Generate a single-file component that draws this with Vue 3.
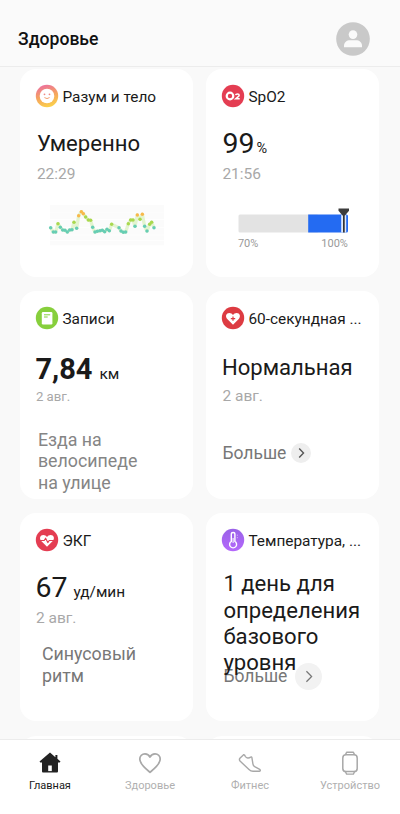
<script setup>
const dots = [
  [32, 83], [40, 96], [47, 96], [54, 71], [61, 82], [68, 90], [75, 91], [82, 96], [89, 90], [96, 89],
  [102, 67], [110, 85], [116, 47], [124, 35], [130, 41], [137, 51], [145, 60], [152, 61], [158, 82],
  [165, 96], [172, 94], [180, 92], [187, 91], [194, 95], [201, 88], [208, 92], [215, 73], [237, 83],
  [243, 93], [250, 97], [257, 96], [265, 71], [272, 60], [279, 60], [285, 79], [292, 45], [300, 58],
  [307, 43], [314, 79], [321, 93], [329, 73], [335, 67], [342, 83],
]
const line = dots.map((d) => d.join(',')).join(' ')
const dotColor = (y) => (y < 50 ? '#f9b84a' : y < 76 ? '#a9d84e' : '#66cdb4')
const bands = [15, 37, 60, 83, 106, 122]
</script>

<template>
  <div class="screen">
    <header class="topbar">
      <h1>Здоровье</h1>
      <svg class="avatar" viewBox="0 0 34 34">
        <circle cx="17" cy="17" r="16.8" fill="#c9c9c9" />
        <circle cx="17" cy="12.6" r="4.3" fill="#fafafa" />
        <path d="M8 25.2v-1.400c0-3.600 2.800-5.600 6-5.600h6c3.200 0 6 2 6 5.600v1.400z" fill="#fafafa" />
      </svg>
    </header>

    <main class="grid">
      <section class="card mind">
        <div class="head">
          <svg viewBox="0 0 24 24">
            <defs>
              <linearGradient id="mind" x1="0.3" y1="0" x2="0.6" y2="1">
                <stop offset="0" stop-color="#ec6f9f" />
                <stop offset="0.5" stop-color="#f5a35f" />
                <stop offset="1" stop-color="#fbd24a" />
              </linearGradient>
            </defs>
            <circle cx="12" cy="12" r="11.200" fill="url(#mind)" />
            <circle cx="12" cy="12" r="7.300" fill="#fff" />
            <circle cx="9.500" cy="10.300" r="0.900" fill="#ee8a85" />
            <circle cx="14.500" cy="10.300" r="0.900" fill="#ee8a85" />
            <path d="M9.700 13.800q2.300 1.800 4.600 0" fill="none" stroke="#f3a070" stroke-width="1" stroke-linecap="round" />
          </svg>
          <h2>Разум и тело</h2>
        </div>
        <p class="value word">Умеренно</p>
        <p class="date">22:29</p>
        <svg class="chart" viewBox="24 12 351 126">
          <rect v-for="(y, i) in bands" :key="y" x="30" :y="y" width="342" :height="i > 3 ? 14 : 21" fill="#fbfbfb" />
          <polyline :points="line" fill="none" stroke="#e3f4cf" stroke-width="10" stroke-linejoin="round" />
          <circle v-for="d in dots" :key="d[0]" :cx="d[0]" :cy="d[1]" r="5.200" :fill="dotColor(d[1])" />
        </svg>
      </section>

      <section class="card oxygen">
        <div class="head">
          <svg viewBox="0 0 24 24">
            <circle cx="12" cy="12" r="11.200" fill="#e43d52" />
            <circle cx="9" cy="12" r="3.300" fill="none" stroke="#fff" stroke-width="2.200" />
            <path d="M14.600 11.200q.2-1.300 1.900-1.300 1.700 0 1.700 1.300 0 .9-1.500 2l-1.900 1.600h3.900" fill="none" stroke="#fff" stroke-width="1.500" />
          </svg>
          <h2>SpO2</h2>
        </div>
        <p class="value number">99<small>%</small></p>
        <p class="date">21:56</p>
        <svg class="gauge" viewBox="0 0 112 26">
          <rect x="0.500" y="7.500" width="80" height="18" rx="1.500" fill="#e3e3e3" />
          <path d="M70.200 7.500h38.300a1.500 1.500 0 0 1 1.500 1.500v15a1.500 1.500 0 0 1-1.500 1.500h-38.300z" fill="#246bf2" />
          <rect x="103.200" y="8" width="5" height="17.500" fill="#dfe9fc" />
          <rect x="105" y="7" width="1.700" height="18.500" fill="#333" />
          <path d="M100.500 1.500h10.500v2.200l-4 4.800h-2.500l-4-4.800z" fill="#3c3c3c" />
        </svg>
        <div class="scale"><span>70%</span><span>100%</span></div>
      </section>

      <section class="card records">
        <div class="head">
          <svg viewBox="0 0 24 24">
            <circle cx="12" cy="12" r="11.200" fill="#87cf3c" />
            <rect x="6.800" y="6" width="10.600" height="12.400" rx="1.200" fill="#fff" />
            <path d="M9 8.800h6.200M9 11h3.700" stroke="#87cf3c" stroke-width="1" />
          </svg>
          <h2>Записи</h2>
        </div>
        <p class="value number">7,84<small>км</small></p>
        <p class="date">2 авг.</p>
        <p class="note">Езда на<br />велосипеде<br />на улице</p>
      </section>

      <section class="card pulse">
        <div class="head">
          <svg viewBox="0 0 24 24">
            <circle cx="12" cy="12" r="11.200" fill="#dd3b42" />
            <path d="M12 18.800 6.500 13.200C3.700 10.200 5.300 6.900 8.300 6.900c1.600 0 2.900.8 3.700 2 .8-1.200 2.100-2 3.700-2 3 0 4.600 3.300 1.800 6.300z" fill="#fff" />
            <path d="M12 10.400v4.400M9.800 12.600h4.400" stroke="#dd3b42" stroke-width="1.200" />
          </svg>
          <h2>60-секундная ...</h2>
        </div>
        <p class="value word">Нормальная</p>
        <p class="date">2 авг.</p>
        <div class="more">
          <span>Больше</span>
          <svg viewBox="0 0 20 20">
            <circle cx="10" cy="10" r="10" fill="#eeeeee" />
            <path d="m8.200 5.600 4.300 4.400-4.300 4.400" fill="none" stroke="#555" stroke-width="1.400" />
          </svg>
        </div>
      </section>

      <section class="card ecg">
        <div class="head">
          <svg viewBox="0 0 24 24">
            <circle cx="12" cy="12" r="11.200" fill="#e43d52" />
            <path d="M12 18.800 6.500 13.200C3.700 10.200 5.300 6.900 8.300 6.900c1.600 0 2.900.8 3.700 2 .8-1.200 2.100-2 3.700-2 3 0 4.600 3.300 1.800 6.300z" fill="#fff" />
            <path d="M5 12.500h4.200l1.400-2.300 2.200 4.400 1.400-2.100H19" fill="none" stroke="#e43d52" stroke-width="1.100" stroke-linejoin="round" />
          </svg>
          <h2>ЭКГ</h2>
        </div>
        <p class="value number">67<small>уд/мин</small></p>
        <p class="date">2 авг.</p>
        <p class="note">Синусовый<br />ритм</p>
      </section>

      <section class="card temperature">
        <div class="head">
          <svg viewBox="0 0 24 24">
            <defs>
              <linearGradient id="temp" x1="0" y1="0" x2="0" y2="1">
                <stop offset="0" stop-color="#9a62e8" />
                <stop offset="1" stop-color="#b468fb" />
              </linearGradient>
            </defs>
            <circle cx="12" cy="12" r="11.200" fill="url(#temp)" />
            <path d="M10.300 13.400V6.300a1.800 1.800 0 0 1 3.600 0v7.100a3.500 3.500 0 1 1-3.600 0z" fill="none" stroke="#fff" stroke-width="1.400" />
            <path d="M12.100 10v5" stroke="#fff" stroke-width="1" />
            <path d="M15.800 7.200h1.200M15.800 9.700h1.200" stroke="#dcc0ff" stroke-width="0.800" />
          </svg>
          <h2>Температура, ...</h2>
        </div>
        <p class="value text">1 день для<br />определения<br />базового<br />уровня</p>
        <div class="more">
          <span>Больше</span>
          <svg viewBox="0 0 26 26">
            <circle cx="13" cy="13" r="13" fill="#f2f2f2" />
            <path d="m11 8 5 5-5 5" fill="none" stroke="#777" stroke-width="1.200" />
          </svg>
        </div>
      </section>

      <section class="card"></section>
      <section class="card"></section>
    </main>

    <nav class="tabs">
      <a class="tab active">
        <svg viewBox="0 0 24 24">
          <path d="M12 1.600 1.500 10.500l.8 1H4v8.700c0 .8.500 1.300 1.300 1.300h13.400c.8 0 1.300-.5 1.300-1.300v-8.700h1.700l.8-1-3.100-2.700V4h-2v2.200z" fill="#222" />
          <rect x="10.200" y="14.500" width="3.600" height="5.600" fill="#fff" />
        </svg>
        <span>Главная</span>
      </a>
      <a class="tab">
        <svg viewBox="0 0 24 24">
          <path d="M12 21.300C8 18 1.800 13.200 1.800 8.300c0-3.200 2.300-5.500 5.200-5.500 2.200 0 4 1.200 5 3.200 1-2 2.800-3.200 5-3.200 2.900 0 5.200 2.300 5.200 5.500 0 4.900-6.200 9.700-10.200 13z" fill="none" stroke="#a8a8a8" stroke-width="1.700" stroke-linejoin="round" />
        </svg>
        <span>Здоровье</span>
      </a>
      <a class="tab">
        <svg viewBox="0 0 24 24">
          <path d="M5.600 3.700 1.900 7.300c-.7.900-.6 1.800.1 2.700l9 8.600c1.200 1.100 2.500 1.700 4 1.700h6.200c1.200 0 1.500-1.300.5-1.900l-5-2.700c-1.100-.7-1.600-1.600-1.800-2.900l-1-6.200c-.1-.7-.8-1-1.300-.5-1.900 1.500-4.200 1.100-5.200-.6-.5-.9-1.100-2.200-1.800-1.800z" fill="none" stroke="#a8a8a8" stroke-width="1.400" stroke-linejoin="round" />
        </svg>
        <span>Фитнес</span>
      </a>
      <a class="tab">
        <svg viewBox="0 0 24 24">
          <rect x="4.800" y="3.800" width="14.400" height="16.800" rx="3.200" fill="none" stroke="#a8a8a8" stroke-width="1.500" />
          <path d="M7.500 3.600 8.600 1.300h6.800l1.100 2.300M7.500 20.800l1.100 2.300h6.800l1.100-2.300" fill="none" stroke="#a8a8a8" stroke-width="1.400" stroke-linejoin="round" />
        </svg>
        <span>Устройство</span>
      </a>
    </nav>
  </div>
</template>

<style>
body {
  margin: 0;
  background: #fff;
}
</style>

<style scoped>
.screen {
  display: flex;
  flex-direction: column;
  width: 400px;
  height: 814px;
  overflow: hidden;
  background: #f9f9f9;
  font-family: Roboto, "Liberation Sans", sans-serif;
  color: #1a1a1a;
}
h1, h2, p {
  margin: 0;
  font-weight: 400;
}
.topbar {
  box-sizing: border-box;
  flex: none;
  display: flex;
  align-items: flex-start;
  justify-content: space-between;
  height: 67px;
  padding: 22px 30px 0 18px;
  border-bottom: 1px solid #ececec;
  background: #fafafa;
}
.topbar h1 {
  font-size: 17.600px;
  line-height: 34px;
  font-weight: 500;
  color: #111;
}
.avatar {
  width: 34px;
  height: 34px;
}
.grid {
  flex: 1;
  min-height: 0;
  overflow: hidden;
  display: grid;
  grid-template-columns: 173px 173px;
  grid-auto-rows: 208px;
  gap: 14.200px 13px;
  padding: 2px 20.400px 0;
}
.card {
  border-radius: 16px;
  background: #fff;
  white-space: nowrap;
}
.head {
  display: flex;
  align-items: center;
  gap: 3.500px;
  height: 24px;
  padding: 15px 0 0 14.500px;
}
.head svg {
  width: 24px;
  height: 24px;
}
.head h2 {
  font-size: 15.400px;
  line-height: 24px;
  padding-top: 1px;
}
.value {
  margin: 20px 0 0 16.500px;
}
.word {
  font-size: 22.100px;
  line-height: 30px;
}
.number {
  height: 32px;
  font-size: 28.500px;
  line-height: 32px;
}
.number small {
  line-height: 0;
}
.date {
  margin: 4px 0 0 16.500px;
  font-size: 15.500px;
  line-height: 20px;
  color: #a8a8a8;
}
.note {
  font-size: 17.800px;
  line-height: 21.300px;
  color: #858585;
}
.more {
  display: flex;
  align-items: center;
  margin-left: 16px;
  font-size: 17.500px;
  color: #777;
}
.mind .date {
  margin-top: 6px;
}
.chart {
  display: block;
  width: 117px;
  height: 42px;
  margin: 20px 0 0 27.500px;
}
.oxygen .value {
  margin-left: 16px;
}
.oxygen .date {
  margin-left: 16px;
}
.oxygen small {
  margin-left: 2px;
  font-size: 14.500px;
}
.gauge {
  display: block;
  width: 112px;
  height: 26px;
  margin: 23px 0 0 31.500px;
}
.scale {
  display: flex;
  justify-content: space-between;
  width: 110px;
  margin: 4px 0 0 31.500px;
  font-size: 11px;
  line-height: 14px;
  color: #999;
}
.records .value {
  margin: 23px 0 0 15px;
  font-size: 29px;
  font-weight: 700;
}
.records small {
  margin-left: 7px;
  font-size: 15.500px;
  font-weight: 400;
}
.records .date {
  margin: 4px 0 0 15.500px;
  font-size: 13.200px;
  line-height: 16px;
}
.records .note {
  margin: 24px 0 0 17.500px;
}
.pulse .value {
  margin: 22px 0 0 15.500px;
}
.pulse .date {
  margin-left: 16px;
}
.pulse .more {
  gap: 5px;
  margin-top: 36px;
}
.pulse .more span {
  padding-top: 1px;
}
.pulse .more svg {
  width: 20px;
  height: 20px;
}
.ecg .value {
  margin-left: 15px;
}
.ecg small {
  margin-left: 6px;
  font-size: 15.400px;
}
.ecg .date {
  margin-left: 15.500px;
}
.ecg .note {
  margin: 15px 0 0 21.500px;
  color: #777;
}
.text {
  position: relative;
  z-index: 1;
  margin: 18px 0 0 17px;
  font-size: 22.100px;
  line-height: 26.200px;
}
.temperature .more {
  gap: 8px;
  margin: -12.600px 0 0 17px;
}
.temperature .more svg {
  width: 27px;
  height: 27px;
}
.tabs {
  box-sizing: border-box;
  flex: none;
  display: grid;
  grid-template-columns: repeat(4, 1fr);
  height: 75px;
  padding-top: 11px;
  border-top: 1px solid #ececec;
  background: #fff;
}
.tab {
  display: flex;
  flex-direction: column;
  align-items: center;
  gap: 4px;
  font-size: 11px;
  line-height: 14px;
  color: #b0b0b0;
}
.tab svg {
  width: 24px;
  height: 24px;
}
.tab.active {
  color: #1a1a1a;
}
</style>
